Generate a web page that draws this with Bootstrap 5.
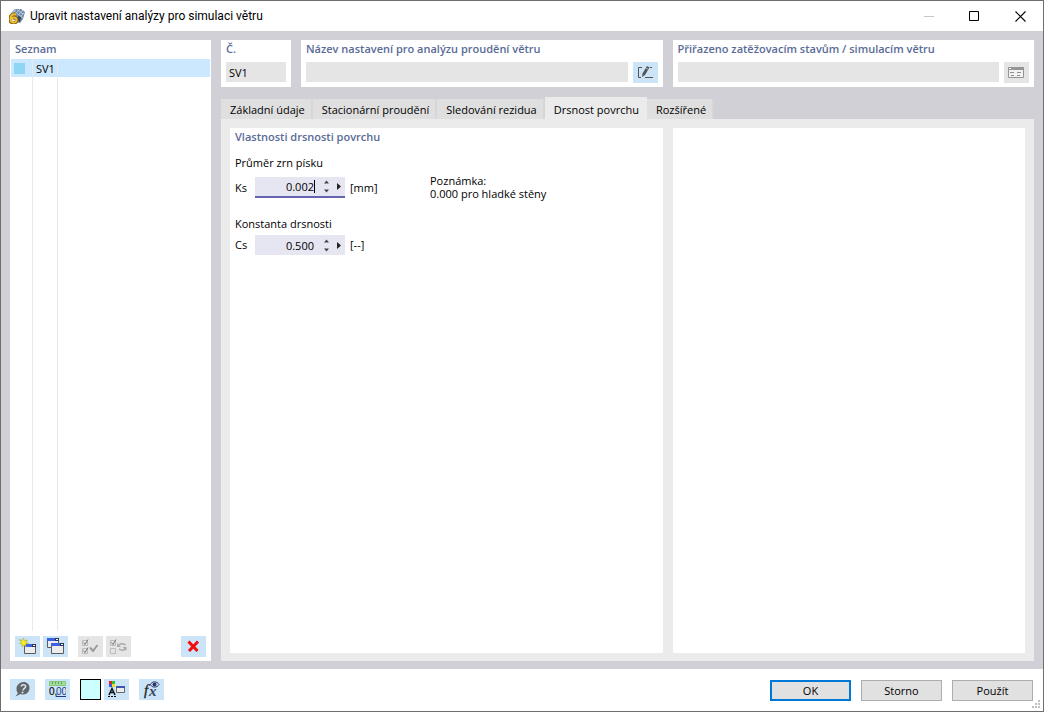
<!DOCTYPE html>
<html lang="cs">
<head>
<meta charset="utf-8">
<meta name="viewport" content="width=device-width, initial-scale=1">
<title>Upravit nastavení analýzy pro simulaci větru</title>
<link href="https://cdn.jsdelivr.net/npm/bootstrap@5.3.0/dist/css/bootstrap.min.css" rel="stylesheet">
<style>
  body { font-family: "Open Sans", "Noto Sans", sans-serif; font-size: 11px; line-height: 16px; color: #000; background: #fff; }
  .dialog { border: 1px solid #6e6e6e; }
  .titlebar { height: 30px; padding-left: 8px; }
  .titlebar h1 { font-family: Roboto, "Open Sans", sans-serif; font-size: 12px; line-height: 16px; font-weight: 400; padding-left: 5px; }
  .win-btn { width: 46px; height: 28px; padding: 0; border: 0; background: none; }
  .win-btn:first-child { width: 44px; }
  .workspace { background: #d1d0d6; padding: 9px 9px 8px; gap: 10px; }
  .side { width: 201px; flex: none; }
  .caption { font-size: 11px; line-height: 18px; font-weight: 600; color: #5a6b97; padding-left: 5px; margin: 0; }
  .items { width: 199px; margin: 1px 1px 0; border-collapse: collapse; }
  .items td { padding: 0; border-right: 1px solid #e9e9e9; }
  .items td:last-child { border-right: 0; }
  .items .col-color { width: 22px; }
  .items .col-no { width: 25px; padding: 2px 0 0 3px; }
  .items .picked { height: 18px; background: #cce8ff; }
  .swatch { width: 11px; height: 11px; margin-left: 3px; background: #8fd6f4; }
  .tool { width: 25px; height: 21px; padding: 0; border: 0; background: #cce4f7; flex: none; display: flex; align-items: center; justify-content: center; }
  .tool:disabled { background: #e5e5e5; }
  .tool svg, .win-btn svg, .spin svg { display: block; }
  .side-tools { padding: 5px 5px 4px; gap: 3px; }
  .check-tools { gap: 3px; margin-left: 7px; }
  .gap-10 { gap: 10px; }
  .box { background: #fff; }
  .top-box { flex: 1 1 0; }
  .box-row { padding: 4px 5px 4px; gap: 5px; }
  .num-box { width: 70px; flex: none; }
  .plain { height: 20px; border: 0; border-radius: 0; background: #e5e5e5; padding: 0 3px; min-width: 0; flex: 1 1 0; color: #000; font-size: 11px; }
  .tabs { margin-top: 10px; height: 22px; }
  .tabs .tab { border: 0; border-right: 2px solid #d6d6d9; background: #dfdfdf; height: 20px; padding: 2px 6px 0 9px; line-height: 18px; white-space: nowrap; }
  .tabs .tab.active { background: #ebebeb; height: 22px; padding-top: 4px; border-color: #ebebeb; }
  .pane { background: #ebebeb; padding: 9px 9px 8px; }
  .wide { flex: 1 1 81px; }
  .narrow { flex: 1 1 0; }
  .props { padding: 0 5px; }
  .form-col { width: 195px; flex: none; padding-top: 9px; }
  .entry { margin-top: 3px; }
  .entry.first { margin: 6px 0 18px; }
  .entry label { width: 20px; }
  .spin { width: 90px; height: 20px; background: #e6e6f2; padding-right: 4px; }
  .spin.editing { height: 21px; border-bottom: 2px solid #6464af; }
  .spin input { width: 59px; flex: none; border: 0; background: none; padding: 1px 0 0; text-align: right; font-size: 11px; line-height: 16px; outline: 0; }
  .spin button { border: 0; background: none; padding: 0; }
  .caret { width: 1px; height: 13px; flex: none; }
  .editing .caret { background: #000; }
  .steps { width: 7px; margin: 0 7px 0 8px; gap: 5px; }
  .unit { margin-left: 5px; }
  .note-col { line-height: 13px; padding-top: 28px; }
  .footer { padding: 10px 10px 10px 9px; }
  .color-tools { gap: 3px; }
  .color-btn { width: 21px; height: 21px; border: 1px solid #000; background: #ccffff; padding: 0; }
  .pushes { padding-top: 1px; }
  .push { width: 81px; height: 21px; border: 1px solid #adadad; background: #e1e1e1; padding: 0; line-height: 19px; }
  .push.default { border: 2px solid #0078d7; line-height: 17px; }
  .grip { position: absolute; right: 2px; bottom: 2px; }
</style>
</head>
<body>
<div class="dialog d-flex flex-column min-vh-100 position-relative">

  <header class="titlebar d-flex align-items-center">
    <svg width="16" height="16" viewBox="0 0 16 16" aria-hidden="true">
      <path d="M2 5 6 1l6 0 4 3-2 7-3 4-4-1-4-5z" fill="#6f89a9"/>
      <path d="M3 5l4-3.500M6 6l5-5M9 7l5-4.500M11 9l4-4M5 3l9 7M8 1.500l6 4.500" fill="none" stroke="#b9cbe0"/>
      <path d="M9 8l3 1-1 5-2-1z" fill="#2f4360"/>
      <path d="M7 6.500C3 5.500 1 8 1 11c0 5 7 5 7 1 0-3-4-3-4.800-1" fill="none" stroke="#8a6712" stroke-width="3.400"/>
      <path d="M7 6.500C3 5.500 1.500 8 1.500 11c0 4.500 6 4.500 6 1 0-3-4-3-4.800-1" fill="none" stroke="#edbd35" stroke-width="2"/>
    </svg>
    <h1 class="mb-0 flex-grow-1">Upravit nastavení analýzy pro simulaci větru</h1>
    <div class="d-flex">
      <button class="win-btn d-flex align-items-center justify-content-center" aria-label="Minimalizovat" disabled><svg width="10" height="10"><path d="M0 5.500h10" stroke="#c5c5c5"/></svg></button>
      <button class="win-btn d-flex align-items-center justify-content-center" aria-label="Maximalizovat"><svg width="10" height="10"><path d="M.5.5h9v9h-9z" fill="none" stroke="#000"/></svg></button>
      <button class="win-btn d-flex align-items-center justify-content-center" aria-label="Zavřít"><svg width="11" height="11"><path d="M.5.5l10 10M10.500.5l-10 10" stroke="#000" stroke-width="1.100"/></svg></button>
    </div>
  </header>

  <main class="workspace d-flex flex-grow-1">
    <aside class="side box d-flex flex-column">
      <h2 class="caption">Seznam</h2>
      <table class="items flex-grow-1 d-flex flex-column">
        <tbody class="d-flex flex-column flex-grow-1">
          <tr class="picked d-flex flex-shrink-0">
            <td class="col-color d-flex align-items-center"><span class="swatch"></span></td>
            <td class="col-no d-flex align-items-center">SV1</td>
            <td class="flex-grow-1"></td>
          </tr>
          <tr class="d-flex flex-grow-1" aria-hidden="true">
            <td class="col-color"></td><td class="col-no"></td><td class="flex-grow-1"></td>
          </tr>
        </tbody>
      </table>
      <div class="side-tools d-flex">
        <button class="tool" aria-label="Nový">
          <svg width="17" height="17" viewBox="0 0 17 17"><path d="M5.500 6.500h11v9h-11z" fill="#ececec" stroke="#5c5c5c"/><path d="M5 6h8v3H5z" fill="#3b62e0"/><path d="M13 6h4v3h-4z" fill="#2a3350"/><path d="M14 7h2v1h-2z" fill="#fff"/><path d="M4.500 0l1 3 3-1-1.500 2.500 2.500 1-3 .5.500 3-2-2-2 2 0-3-2.500-.5 2-1.500L0 1.500l3 1z" fill="#f4ee1f" stroke="#a19b3a" stroke-width=".5"/></svg>
        </button>
        <button class="tool" aria-label="Kopírovat">
          <svg width="17" height="17" viewBox="0 0 17 17"><path d="M.5.5h11v9H.5z" fill="#ececec" stroke="#5c5c5c"/><path d="M0 0h8v3H0z" fill="#3b62e0"/><path d="M8 0h4v3H8z" fill="#2a3350"/><path d="M9 1h2v1H9z" fill="#fff"/><path d="M4.500 5.500h12v10h-12z" fill="#ececec" stroke="#5c5c5c"/><path d="M4 5h9v3H4z" fill="#3b62e0"/><path d="M13 5h4v3h-4z" fill="#2a3350"/><path d="M14 6h2v1h-2z" fill="#fff"/></svg>
        </button>
        <div class="check-tools d-flex">
          <button class="tool" aria-label="Vybrat vše" disabled>
            <svg width="17" height="15" viewBox="0 0 17 15" fill="none" stroke="#9a9a9a"><path d="M.5 1.500h5v5h-5zM.5 9.500h5v5h-5z" stroke="#bbb"/><path d="M1.500 3.500l1.500 2 3-5M1.500 11.500l1.500 2 3-5" stroke="#777"/><path d="M8 8.500l3 3.500L15.500 6" stroke-width="2"/></svg>
          </button>
          <button class="tool" aria-label="Obrátit výběr" disabled>
            <svg width="17" height="15" viewBox="0 0 17 15" fill="none" stroke="#aaa"><path d="M.5 1.500h5v5h-5zM.5 9.500h5v5h-5z" stroke="#bbb"/><path d="M1.500 3.500l1.500 2 3-5" stroke="#777"/><path d="M9 6c2-2 4-1.500 6.500 0M15 10c-2 2-4 1.500-6 0" stroke-width="1.500"/><path d="M7 4v4h4zM16.500 12V8h-4z" fill="#aaa" stroke="none"/></svg>
          </button>
        </div>
        <button class="tool ms-auto" aria-label="Smazat">
          <svg width="13" height="13" viewBox="0 0 13 13"><path d="M1.500 1.500l9 9.500M11 1.500l-9 9.500" stroke="#f20d0d" stroke-width="3"/></svg>
        </button>
      </div>
    </aside>

    <section class="d-flex flex-column flex-grow-1">
      <div class="d-flex gap-10">
        <div class="box num-box">
          <h2 class="caption"><label for="no">Č.</label></h2>
          <div class="box-row d-flex"><input id="no" class="plain" value="SV1" readonly></div>
        </div>
        <div class="box top-box">
          <h2 class="caption"><label for="name">Název nastavení pro analýzu proudění větru</label></h2>
          <div class="box-row d-flex">
            <input id="name" class="plain" readonly>
            <button class="tool" aria-label="Upravit název">
              <svg width="17" height="15" viewBox="0 0 17 15"><path d="M5 2.500H1.500v10H4M13 2.500h2M8 12.500h8" fill="none" stroke="#555"/><path d="M5.500 8.500l4.500-7.500 2.500 1.500-4.500 7.500L5 12z" fill="#555"/><path d="M9 3l2.500 1.500" stroke="#cce4f7" stroke-width=".7"/></svg>
            </button>
          </div>
        </div>
        <div class="box top-box">
          <h2 class="caption"><label for="assigned">Přiřazeno zatěžovacím stavům / simulacím větru</label></h2>
          <div class="box-row d-flex">
            <input id="assigned" class="plain" readonly>
            <button class="tool" aria-label="Podrobnosti" disabled>
              <svg width="17" height="11" viewBox="0 0 17 11"><path d="M.5.5h15v10H.5z" fill="#f2f2f2" stroke="#959595"/><path d="M0 0h16v3H0z" fill="#959595"/><path d="M1 1h2v1H1z" fill="#fff"/><path d="M2 5.500h4M9 5.500h4M3 8.500h3M9 8.500h3" stroke="#8e8e8e"/></svg>
            </button>
          </div>
        </div>
      </div>

      <div class="tabs d-flex align-items-end" role="tablist">
        <button class="tab" role="tab">Základní údaje</button>
        <button class="tab" role="tab">Stacionární proudění</button>
        <button class="tab" role="tab">Sledování rezidua</button>
        <button class="tab active" role="tab" aria-selected="true">Drsnost povrchu</button>
        <button class="tab" role="tab">Rozšířené</button>
      </div>

      <div class="pane d-flex flex-grow-1 gap-10" role="tabpanel">
        <div class="box wide">
          <h2 class="caption">Vlastnosti drsnosti povrchu</h2>
          <div class="props d-flex">
            <div class="form-col">
              <div>Průměr zrn písku</div>
              <div class="entry first d-flex align-items-center">
                <label for="ks">Ks</label>
                <div class="spin editing d-flex align-items-center">
                  <input id="ks" value="0.002"><span class="caret"></span>
                  <span class="steps d-flex flex-column">
                    <button aria-label="Zvýšit Ks"><svg width="7" height="4"><path d="M1 3.500 3.500.5 6 3.500z" fill="#444"/></svg></button>
                    <button aria-label="Snížit Ks"><svg width="7" height="4"><path d="M1 .5 3.500 3.500 6 .5z" fill="#444"/></svg></button>
                  </span>
                  <button aria-label="Možnosti Ks"><svg width="4" height="7"><path d="M0 0v7l4-3.500z" fill="#222"/></svg></button>
                </div>
                <span class="unit">[mm]</span>
              </div>
              <div>Konstanta drsnosti</div>
              <div class="entry d-flex align-items-center">
                <label for="cs">Cs</label>
                <div class="spin d-flex align-items-center">
                  <input id="cs" value="0.500"><span class="caret"></span>
                  <span class="steps d-flex flex-column">
                    <button aria-label="Zvýšit Cs"><svg width="7" height="4"><path d="M1 3.500 3.500.5 6 3.500z" fill="#444"/></svg></button>
                    <button aria-label="Snížit Cs"><svg width="7" height="4"><path d="M1 .5 3.500 3.500 6 .5z" fill="#444"/></svg></button>
                  </span>
                  <button aria-label="Možnosti Cs"><svg width="4" height="7"><path d="M0 0v7l4-3.500z" fill="#222"/></svg></button>
                </div>
                <span class="unit">[--]</span>
              </div>
            </div>
            <p class="note-col mb-0">Poznámka:<br>0.000 pro hladké stěny</p>
          </div>
        </div>
        <div class="box narrow"></div>
      </div>
    </section>
  </main>

  <footer class="footer d-flex gap-10">
    <button class="tool" aria-label="Nápověda">
      <svg width="15" height="15" viewBox="0 0 15 15"><path d="M8.500 0C12 0 14.500 2.500 14.500 6s-2.500 6.500-6 6.500c-1 0-2 0-3-.5L.5 14.500 3 11C1.500 9.500 1.500 8 1.500 6.500 1.500 3 5 0 8.500 0z" fill="#606569"/><path d="M6 4.500c1-2.500 5.500-2 4.500.5C10 6.500 8.300 6.500 8 8.500" fill="none" stroke="#dbe8f3" stroke-width="1.500"/><circle cx="7.500" cy="10.500" r="1" fill="#dbe8f3"/></svg>
    </button>
    <button class="tool" aria-label="Jednotky a desetinná místa">
      <svg width="17" height="17" viewBox="0 0 17 17"><path d="M.5.5h16v4H.5z" fill="#a5dc9a" stroke="#84c87c"/><path d="M3.500 1v2M6.500 1v2M9.500 1v2M12.500 1v2" stroke="#5fa05a"/><text x="0" y="14" font-family="Liberation Sans" font-size="10" fill="#111" stroke="#111" stroke-width=".2">0,</text><text x="7" y="14" font-family="Liberation Sans" font-size="10" fill="#1d3c85">00</text><path d="M7 15.500h10" stroke="#1d3c85"/></svg>
    </button>
    <div class="color-tools d-flex">
      <button class="color-btn" aria-label="Barva"></button>
      <button class="tool" aria-label="Zobrazení">
        <svg width="17" height="17" viewBox="0 0 17 17"><path d="M1 0h3v3H1z" fill="#e8202a"/><path d="M4 0h3v3H4z" fill="#2cbf3b"/><path d="M1 3h3v3H1z" fill="#3757e6"/><path d="M4 3h3v3H4z" fill="#f0df20"/><path d="M1 14 4 7.500l3 6.500M2 11.500h4" fill="none" stroke="#111" stroke-width="1.500"/><path d="M0 15.500h8" stroke="#111" stroke-dasharray="2 1"/><path d="M8.500 5.500h8v6h-8z" fill="#ececec" stroke="#6a6a6a"/><path d="M8 5h9v2H8z" fill="#3b55ae"/></svg>
      </button>
    </div>
    <button class="tool" aria-label="Vzorce">
      <svg width="17" height="19" viewBox="0 0 17 19"><text x="1" y="15" font-family="Liberation Serif" font-size="15" font-style="italic" fill="#222" stroke="#222" stroke-width=".3">f</text><text x="6" y="16" font-family="Liberation Serif" font-size="15" font-style="italic" font-weight="700" fill="#37475c">x</text><path d="M7.500 4.500C9 1 14 1 16 4.500 14 8 9 8 7.500 4.500z" fill="#dce6f5" stroke="#27366b"/><circle cx="11.500" cy="4.500" r="2" fill="#27366b"/></svg>
    </button>
    <div class="pushes d-flex gap-10 ms-auto">
      <button class="push default">OK</button>
      <button class="push">Storno</button>
      <button class="push">Použít</button>
    </div>
  </footer>
  <svg class="grip" width="9" height="9" aria-hidden="true" fill="#bfbfbf"><path d="M6 0h2v2H6zM3 3h2v2H3zM6 3h2v2H6zM0 6h2v2H0zM3 6h2v2H3zM6 6h2v2H6z"/></svg>
</div>
<script src="https://cdn.jsdelivr.net/npm/bootstrap@5.3.0/dist/js/bootstrap.bundle.min.js"></script>
</body>
</html>
